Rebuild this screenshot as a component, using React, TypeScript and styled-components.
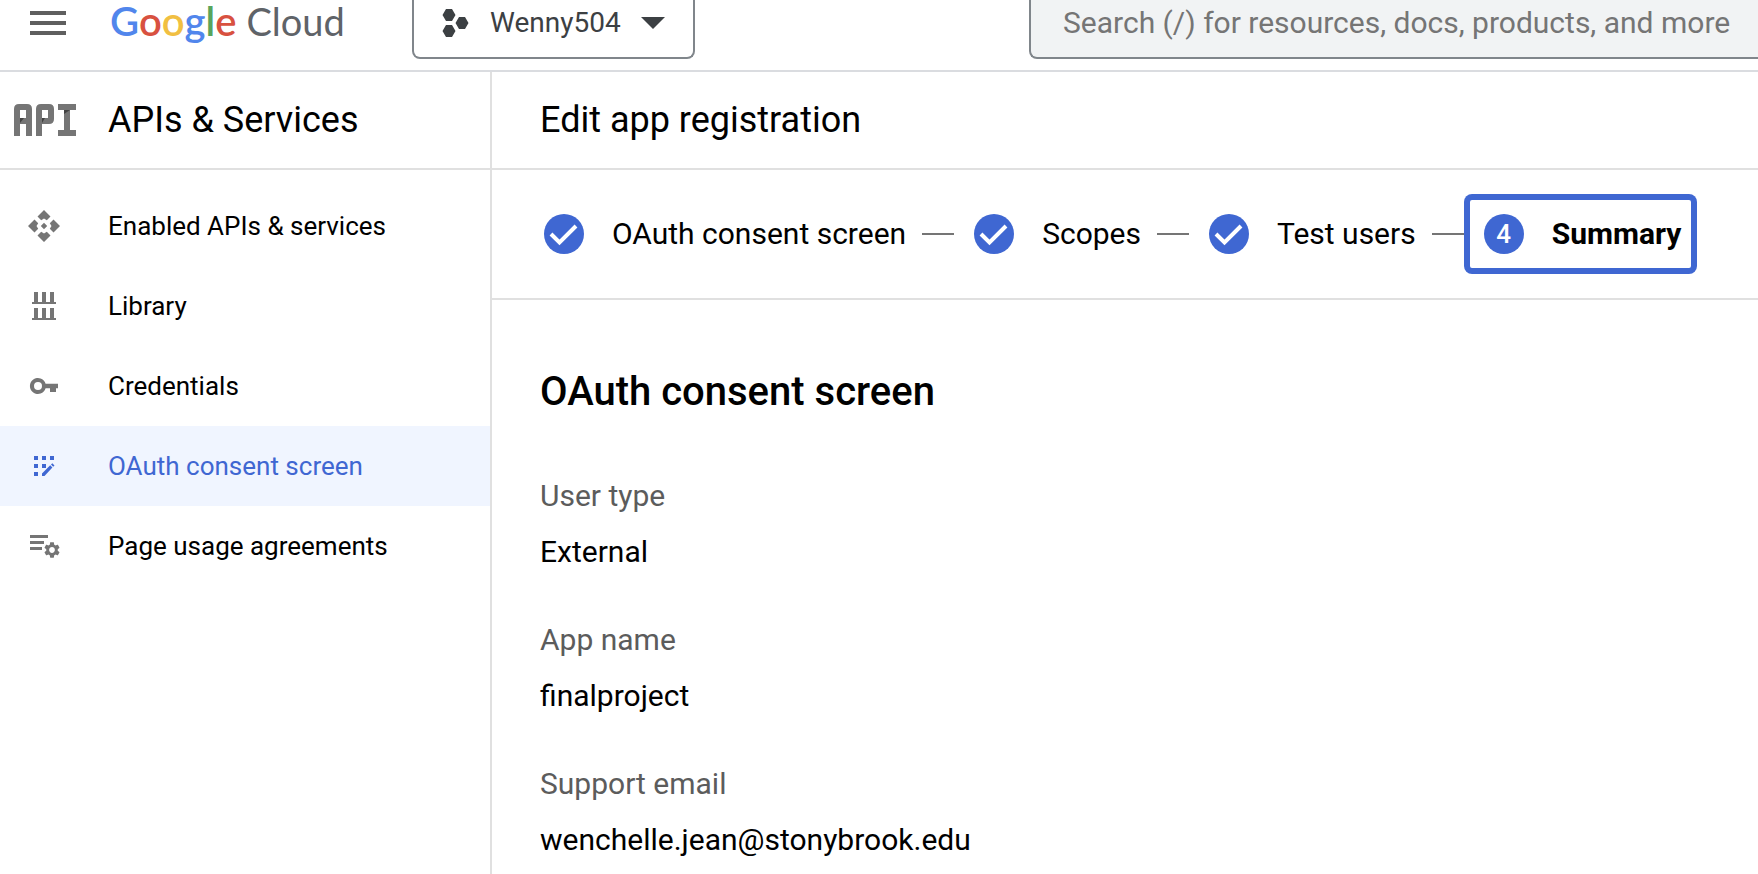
import React from "react";
import styled, { createGlobalStyle, css } from "styled-components";

const blue = "#3f67d2";
const line = "#e0e0e0";
const iconGrey = "#757575";

const GlobalStyle = createGlobalStyle`
  *, *::before, *::after { box-sizing: border-box; }
  html, body, #root { height: 100%; }
  body {
    margin: 0;
    overflow: hidden;
    background: #fff;
    color: #000;
    font-family: Roboto, "Liberation Sans", sans-serif;
  }
  button, input { font: inherit; }
`;

const Page = styled.div`
  min-height: 100%;
  display: flex;
  flex-direction: column;
`;

const TopBar = styled.header`
  display: flex;
  flex: none;
  padding-bottom: 11px;
  border-bottom: 2px solid #dadce0;
`;

const MenuButton = styled.button`
  display: flex;
  align-items: center;
  height: 46px;
  padding: 0 0 0 30px;
  border: 0;
  background: none;
`;

const Logo = styled.a`
  display: flex;
  align-items: baseline;
  gap: 10px;
  width: 302px;
  height: 46px;
  padding-left: 44px;
  flex: none;
  font-family: Lato, Roboto, sans-serif;
  font-size: 38px;
  line-height: 42px;
  color: #5f6368;
  text-decoration: none;
`;

const Brand = styled.span`
  font-size: 40px;
  font-weight: 600;
`;

const Letter = styled.span<{ $color: string }>`
  color: ${(p) => p.$color};
`;

const field = css`
  height: 59px;
  border: 2px solid #80868b;
  border-top: 0;
  border-radius: 0 0 8px 8px;
  padding-bottom: 13px;
`;

const ProjectPicker = styled.button`
  ${field}
  display: flex;
  align-items: center;
  flex: none;
  width: 283px;
  margin-left: 44px;
  padding-left: 28px;
  padding-right: 28px;
  background: #fff;
  color: #3c4043;
  font-size: 28px;
  line-height: 36px;
`;

const ProjectName = styled.span`
  flex: 1;
  padding-left: 21px;
  text-align: left;
`;

const SearchInput = styled.input`
  ${field}
  flex: 1 0 728px;
  margin-left: 334px;
  padding-left: 32px;
  border-right: 0;
  border-bottom-right-radius: 0;
  background: #f1f3f4;
  font-size: 30px;
  &::placeholder { color: #757575; opacity: 1; }
`;

const Body = styled.div`
  display: flex;
  flex: 1;
`;

const Sidebar = styled.aside`
  width: 492px;
  flex: none;
  border-right: 2px solid ${line};
`;

const TitleBar = styled.div`
  display: flex;
  align-items: center;
  height: 98px;
  border-bottom: 2px solid ${line};
`;

const SideTitleBar = styled(TitleBar)`
  padding-left: 14px;
  gap: 32px;
`;

const Title = styled.h1`
  margin: 0;
  font-size: 36px;
  line-height: 48px;
  font-weight: 400;
`;

const Nav = styled.nav`
  padding-top: 16px;
`;

const NavItem = styled.a<{ $active?: boolean }>`
  display: flex;
  align-items: center;
  gap: 46px;
  height: 80px;
  padding-left: 26px;
  font-size: 26px;
  line-height: 32px;
  text-decoration: none;
  color: ${(p) => (p.$active ? blue : "#000")};
  background: ${(p) => (p.$active ? "#f0f5ff" : "transparent")};
  svg { color: ${(p) => (p.$active ? blue : iconGrey)}; }
`;

const Main = styled.main`
  flex: 1;
  min-width: 0;
`;

const MainTitleBar = styled(TitleBar)`
  padding-left: 48px;
`;

const Stepper = styled.ol`
  display: flex;
  align-items: center;
  height: 130px;
  margin: 0;
  padding: 0 0 0 32px;
  list-style: none;
  border-bottom: 2px solid ${line};
`;

const StepItem = styled.li`
  display: flex;
  align-items: center;
  flex: none;
  & + &::before {
    content: "";
    width: 32px;
    height: 2px;
    background: #757575;
  }
`;

const StepButton = styled.button<{ $current?: boolean }>`
  display: flex;
  align-items: center;
  gap: 28px;
  height: 80px;
  padding: 0 16px 0 20px;
  border: 0;
  border-radius: 8px;
  background: none;
  color: #000;
  font-size: 30px;
  line-height: 40px;
  font-weight: ${(p) => (p.$current ? 700 : 400)};
  box-shadow: ${(p) => (p.$current ? `inset 0 0 0 6px ${blue}` : "none")};
`;

const StepMark = styled.span`
  display: flex;
  align-items: center;
  justify-content: center;
  width: 40px;
  height: 40px;
  border-radius: 50%;
  background: ${blue};
  color: #fff;
  font-size: 26px;
  font-weight: 500;
`;

const Content = styled.section`
  padding: 64px 48px 0;
`;

const Heading = styled.h2`
  margin: 0 0 56px;
  font-size: 40px;
  line-height: 56px;
  font-weight: 500;
`;

const Details = styled.dl`
  margin: 0;
  display: grid;
  gap: 48px;
`;

const Detail = styled.div`
  display: grid;
  gap: 16px;
  font-size: 30px;
  line-height: 40px;
`;

const Term = styled.dt`
  color: #5c5c5c;
`;

const Value = styled.dd`
  margin: 0;
`;

const MenuIcon = () => (
  <svg width="36" height="24" viewBox="0 0 36 24" fill="#5f5f5f" aria-hidden="true">
    <path d="M0 0h36v4H0zM0 10h36v4H0zM0 20h36v4H0z" />
  </svg>
);

const ProjectIcon = () => (
  <svg width="27" height="28" viewBox="0 0 27 28" fill="#3c4043" aria-hidden="true">
    <path d="M4 0h6l3.500 6-3.500 6H4L.5 6zM4 16h6l3.500 6-3.500 6H4L.5 22zM17 8h6l3.500 6-3.500 6h-6l-3.500-6z" />
  </svg>
);

const CaretIcon = () => (
  <svg width="24" height="12" viewBox="0 0 24 12" fill="#3c4043" aria-hidden="true">
    <path d="M0 0h24L12 12z" />
  </svg>
);

const ApiIcon = () => (
  <svg width="62" height="32" viewBox="0 0 62 32" aria-hidden="true">
    <path
      fill={iconGrey}
      fillRule="evenodd"
      d="M5 0h8q5 0 5 5v27h-6V20H6v12H0V5q0-5 5-5zM6 6v8h6V6zM27 0h8q5 0 5 5v10q0 5-5 5h-7v12h-6V5q0-5 5-5zM28 6v8h6V6zM44 0h18v6h-6v20h6v6H44v-6h6V6h-6z"
    />
    <path fill="#424242" d="M6 14h4l-4 5zM28 14h3l-3 5zM50 6h6l-6 4z" />
  </svg>
);

const EnabledIcon = () => (
  <svg width="36" height="36" viewBox="0 0 36 36" fill="currentColor" aria-hidden="true">
    <path d="M18 2l6.500 6.500L20.800 12.200 18 10.500l-2.800 1.700L11.500 8.500zM18 34l6.500-6.500-3.700-3.700L18 25.500l-2.800-1.700-3.700 3.700zM2 18l6.500-6.500 3.700 3.700L10.500 18l1.700 2.800-3.700 3.700zM34 18l-6.500-6.500-3.700 3.700L25.500 18l-1.700 2.800 3.700 3.700zM18 14.800l3.200 3.200-3.200 3.200-3.200-3.200z" />
  </svg>
);

const LibraryIcon = () => (
  <svg width="36" height="36" viewBox="0 0 36 36" fill="currentColor" aria-hidden="true">
    <path d="M8 4h4v10h4V4h4v10h4V4h4v10h2v2H6v-2h2zM8 20h4v10h4V20h4v10h4V20h4v10h2v2H6v-2h2z" />
  </svg>
);

const KeyIcon = () => (
  <svg width="36" height="36" viewBox="0 0 36 36" fill="currentColor" aria-hidden="true">
    <path
      fillRule="evenodd"
      d="M19.600 15.800A8 8 0 1 0 19.600 20.200H24V24h6v-3.800h2v-4.400zM12 14a4 4 0 1 1 0 8 4 4 0 0 1 0-8z"
    />
  </svg>
);

const ConsentIcon = () => (
  <svg width="36" height="36" viewBox="0 0 36 36" fill="currentColor" aria-hidden="true">
    <path d="M8 8h4v4H8zM16 8h4v4h-4zM24 8h4v4h-4zM8 16h4v4H8zM16 16h4v4h-4zM8 24h4v4H8zM16 28v-2.500l8.200-8.200 2.200 2.200L18.500 28zM25 16.500l1.300-1.300 2.200 2.200-1.300 1.300z" />
  </svg>
);

const AgreementsIcon = () => (
  <svg width="36" height="36" viewBox="0 0 36 36" fill="currentColor" aria-hidden="true">
    <path d="M4 7h18v3H4zM4 13h14v3H4zM4 19h12v3H4z" />
    <path
      transform="translate(16.400 12.400) scale(.8)"
      d="M19.140 12.940c.04-.3.06-.61.06-.94 0-.32-.02-.64-.07-.94l2.030-1.580c.18-.14.23-.41.12-.61l-1.920-3.320c-.12-.22-.37-.29-.59-.22l-2.390.96c-.5-.38-1.030-.7-1.620-.94l-.36-2.540c-.04-.24-.24-.41-.48-.41h-3.840c-.24 0-.43.17-.47.41l-.36 2.540c-.59.24-1.130.57-1.620.94l-2.390-.96c-.22-.08-.47 0-.59.22L2.740 8.870c-.12.21-.08.47.12.61l2.030 1.580c-.05.3-.09.63-.09.94s.02.64.07.94l-2.030 1.580c-.18.14-.23.41-.12.61l1.920 3.320c.12.22.37.29.59.22l2.390-.96c.5.38 1.030.7 1.620.94l.36 2.540c.05.24.24.41.48.41h3.840c.24 0 .44-.17.47-.41l.36-2.540c.59-.24 1.130-.56 1.620-.94l2.390.96c.22.08.47 0 .59-.22l1.920-3.320c.12-.22.07-.47-.12-.61l-2.010-1.580zM12 15.600c-1.980 0-3.600-1.620-3.600-3.600s1.620-3.600 3.600-3.600 3.600 1.620 3.600 3.600-1.620 3.600-3.600 3.600z"
    />
  </svg>
);

const CheckIcon = () => (
  <svg width="40" height="40" viewBox="0 0 40 40" fill="none" stroke="#fff" strokeWidth="4" aria-hidden="true">
    <path d="m7 20 8.500 8.500L32 12" />
  </svg>
);

const brandLetters: [string, string][] = [
  ["G", "#5186ec"],
  ["o", "#d85140"],
  ["o", "#f1bf42"],
  ["g", "#5186ec"],
  ["l", "#58a55c"],
  ["e", "#d85140"],
];

const navItems = [
  { label: "Enabled APIs & services", Icon: EnabledIcon },
  { label: "Library", Icon: LibraryIcon },
  { label: "Credentials", Icon: KeyIcon },
  { label: "OAuth consent screen", Icon: ConsentIcon, active: true },
  { label: "Page usage agreements", Icon: AgreementsIcon },
];

const steps = ["OAuth consent screen", "Scopes", "Test users", "Summary"];
const currentStep = 3;

const details = [
  ["User type", "External"],
  ["App name", "finalproject"],
  ["Support email", "wenchelle.jean@stonybrook.edu"],
];

export default function App() {
  return (
    <Page>
      <GlobalStyle />
      <TopBar>
        <MenuButton type="button" aria-label="Navigation menu">
          <MenuIcon />
        </MenuButton>
        <Logo href="#home">
          <Brand>
            {brandLetters.map(([letter, color], i) => (
              <Letter key={i} $color={color}>{letter}</Letter>
            ))}
          </Brand>
          <span>Cloud</span>
        </Logo>
        <ProjectPicker type="button">
          <ProjectIcon />
          <ProjectName>Wenny504</ProjectName>
          <CaretIcon />
        </ProjectPicker>
        <SearchInput
          type="search"
          aria-label="Search"
          placeholder="Search (/) for resources, docs, products, and more"
        />
      </TopBar>
      <Body>
        <Sidebar>
          <SideTitleBar>
            <ApiIcon />
            <Title as="h2">APIs &amp; Services</Title>
          </SideTitleBar>
          <Nav>
            {navItems.map(({ label, Icon, active }) => (
              <NavItem key={label} href="#nav" $active={active} aria-current={active ? "page" : undefined}>
                <Icon />
                {label}
              </NavItem>
            ))}
          </Nav>
        </Sidebar>
        <Main>
          <MainTitleBar>
            <Title>Edit app registration</Title>
          </MainTitleBar>
          <Stepper>
            {steps.map((label, i) => (
              <StepItem key={label}>
                <StepButton type="button" $current={i === currentStep} aria-current={i === currentStep ? "step" : undefined}>
                  <StepMark>{i < currentStep ? <CheckIcon /> : i + 1}</StepMark>
                  {label}
                </StepButton>
              </StepItem>
            ))}
          </Stepper>
          <Content>
            <Heading>OAuth consent screen</Heading>
            <Details>
              {details.map(([term, value]) => (
                <Detail key={term}>
                  <Term>{term}</Term>
                  <Value>{value}</Value>
                </Detail>
              ))}
            </Details>
          </Content>
        </Main>
      </Body>
    </Page>
  );
}
